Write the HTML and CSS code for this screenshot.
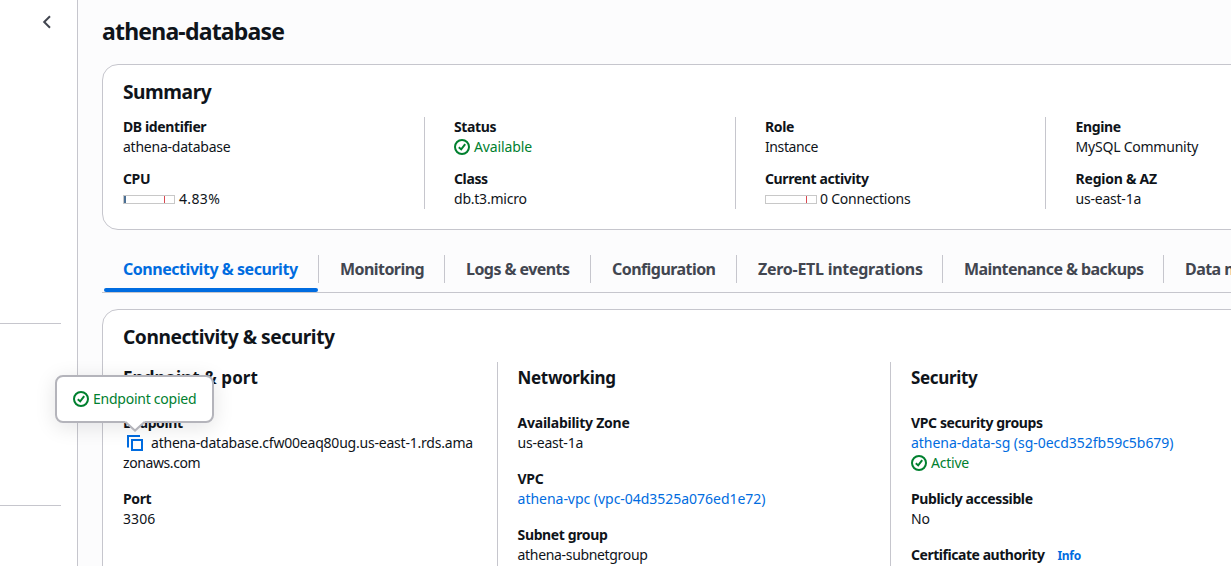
FILE: index.html
```html
<!DOCTYPE html>
<html lang="en">
<head>
<meta charset="utf-8">
<title>athena-database</title>
<link rel="stylesheet" href="styles.css">
</head>
<body>
<svg class="defs" width="0" height="0" aria-hidden="true">
  <symbol id="check" viewBox="0 0 16 16">
    <circle cx="8" cy="8" r="7" fill="none" stroke="currentColor" stroke-width="2"/>
    <path d="M4.8 8.3 7.2 10.4 11.2 5.2" fill="none" stroke="currentColor" stroke-width="2"/>
  </symbol>
</svg>
<div class="app">
  <aside class="sidebar">
    <button class="collapse" aria-label="Close navigation">
      <svg width="10" height="14" viewBox="0 0 10 14"><path d="M8 1.2 2.2 7 8 12.8" fill="none" stroke="currentColor" stroke-width="2"/></svg>
    </button>
    <hr class="rule rule-first">
    <hr class="rule">
  </aside>
  <main class="main">
    <h1 class="title">athena-database</h1>

    <section class="card summary">
      <h2 class="heading">Summary</h2>
      <div class="summary-grid">
        <div class="col">
          <div><div class="label">DB identifier</div><div class="value">athena-database</div></div>
          <div><div class="label">CPU</div><div class="value row"><span class="meter"><span class="meter-fill"></span><span class="meter-mark"></span></span><span class="percent">4.83%</span></div></div>
        </div>
        <div class="col">
          <div><div class="label">Status</div><div class="value row ok"><svg class="icon"><use href="#check"/></svg><span class="state">Available</span></div></div>
          <div><div class="label">Class</div><div class="value">db.t3.micro</div></div>
        </div>
        <div class="col">
          <div><div class="label">Role</div><div class="value tight">Instance</div></div>
          <div><div class="label">Current activity</div><div class="value row activity"><span class="meter"><span class="meter-mark"></span></span><span>0 Connections</span></div></div>
        </div>
        <div class="col">
          <div><div class="label">Engine</div><div class="value">MySQL Community</div></div>
          <div><div class="label loose">Region &amp; AZ</div><div class="value">us-east-1a</div></div>
        </div>
      </div>
    </section>

    <nav class="tabs">
      <a class="tab active"><span class="tab-text">Connectivity &amp; security</span></a>
      <a class="tab"><span class="tab-text">Monitoring</span></a>
      <a class="tab"><span class="tab-text">Logs &amp; events</span></a>
      <a class="tab"><span class="tab-text">Configuration</span></a>
      <a class="tab wide"><span class="tab-text">Zero-ETL integrations</span></a>
      <a class="tab"><span class="tab-text">Maintenance &amp; backups</span></a>
      <a class="tab"><span class="tab-text">Data migrations</span></a>
    </nav>

    <section class="card details">
      <h2 class="heading">Connectivity &amp; security</h2>
      <div class="details-grid">
        <div class="pane">
          <h3 class="subheading loose-heading">Endpoint &amp; port</h3>
          <div class="field">
            <div class="label">Endpoint</div>
            <div class="value endpoint">
              <span class="copy">
                <svg class="copy-icon" viewBox="0 0 16 16"><path d="M1 12.5V1h12M5 5h10v10H5z" fill="none" stroke="currentColor" stroke-width="2"/></svg>
                <span class="popover"><svg class="icon"><use href="#check"/></svg><span>Endpoint copied</span><svg class="arrow" width="20" height="11" viewBox="0 0 20 11"><path d="M0 0H20L10 10Z" fill="#fff"/><path d="M.5 1 10 9.6 19.5 1" fill="none" stroke="#b4b4bb" stroke-width="2"/></svg></span>
              </span>athena-database.cfw00eaq80ug.us-east-1.rds.ama<br><span class="tight">zonaws.com</span>
            </div>
          </div>
          <div class="field"><div class="label">Port</div><div class="value number">3306</div></div>
        </div>
        <div class="pane">
          <h3 class="subheading">Networking</h3>
          <div class="field"><div class="label loose">Availability Zone</div><div class="value">us-east-1a</div></div>
          <div class="field"><div class="label">VPC</div><a class="value link">athena-vpc (vpc-04d3525a076ed1e72)</a></div>
          <div class="field"><div class="label">Subnet group</div><div class="value tight-group">athena-subnetgroup</div></div>
        </div>
        <div class="pane">
          <h3 class="subheading">Security</h3>
          <div class="field"><div class="label">VPC security groups</div><a class="value link">athena-data-sg (sg-0ecd352fb59c5b679)</a><div class="value row ok"><svg class="icon"><use href="#check"/></svg><span>Active</span></div></div>
          <div class="field"><div class="label">Publicly accessible</div><div class="value">No</div></div>
          <div class="field"><div class="label authority">Certificate authority<a class="info">Info</a></div></div>
        </div>
      </div>
    </section>
  </main>
</div>
</body>
</html>
```
FILE: styles.css
```css
* { box-sizing: border-box; }
body {
  margin: 0;
  overflow: hidden;
  background: #fcfcfd;
  color: #0f141a;
  font: 14px/20px "Noto Sans", "Open Sans", sans-serif;
}
h1, h2, h3 { margin: 0; font-weight: 700; }
.defs { display: none; }
.app { display: flex; height: 566px; overflow: hidden; }

.sidebar {
  flex: 0 0 78px;
  display: flex;
  flex-direction: column;
  background: #fff;
  border-right: 1px solid #c6c6cd;
}
.collapse {
  display: block;
  width: 10px;
  height: 14px;
  margin: 15px 0 0 42px;
  padding: 0;
  border: 0;
  background: none;
  color: #424650;
}
.collapse svg { display: block; }
.rule {
  width: 61px;
  height: 1px;
  margin: 181px 0 0;
  border: 0;
  background: #c6c6cd;
}
.rule-first { margin-top: 294px; }

.main { flex: 0 0 1240px; padding: 16px 0 0 24px; }
.title { font-size: 23px; line-height: 30px; letter-spacing: -0.8px; }
.card {
  border: 1px solid #c6c6cd;
  border-radius: 16px;
  background: #fff;
  padding: 15px 20px 0;
}
.heading { font-size: 19.2px; line-height: 24px; letter-spacing: -0.46px; }
.label { font-weight: 700; letter-spacing: -0.38px; }
.loose { letter-spacing: -0.25px; }
.authority { letter-spacing: -0.46px; }
.value { letter-spacing: -0.23px; }
.tight { letter-spacing: -0.4px; }
.tight-group { letter-spacing: -0.33px; }
.number { letter-spacing: 0.1px; }
.percent { letter-spacing: 0.35px; }
.state { letter-spacing: -0.12px; }
.link { display: block; color: #006ce0; letter-spacing: -0.03px; }
.row { display: flex; align-items: center; gap: 4px; }
.activity { gap: 3px; }
.ok { color: #00802f; }
.icon { flex: none; width: 16px; height: 16px; }

.summary { height: 166px; margin-top: 18px; }
.summary-grid {
  display: grid;
  grid-template-columns: 301px 311px 310px 300px;
  margin-top: 13px;
}
.col { display: grid; gap: 12px; }
.col + .col { padding-left: 29px; border-left: 1px solid #c6c6cd; }
.col:last-child { padding-left: 29.6px; }
.meter {
  display: flex;
  width: 52px;
  height: 9px;
  border: 1px solid #c8c8c8;
}
.meter-fill { width: 2px; margin-right: -2px; background: #4a6f94; }
.meter-mark { width: 1px; margin-left: 40px; background: #d9474f; }

.tabs {
  display: grid;
  grid-template-columns: 217px 126px 146px 146px 206px 221px 178px;
  height: 44px;
  margin-top: 19px;
  border-bottom: 1px solid #c6c6cd;
  color: #424650;
  font-size: 16px;
  font-weight: 700;
  letter-spacing: -0.56px;
}
.tab { padding-top: 6px; white-space: nowrap; }
.tab-text { display: block; height: 28px; padding-left: 21px; line-height: 28px; border-right: 1px solid #c6c6cd; }
.wide { letter-spacing: -0.27px; }
.active { color: #006ce0; letter-spacing: -0.46px; }
.active::after {
  content: "";
  display: block;
  width: 214px;
  height: 4px;
  margin: 5px 0 0 2px;
  border-radius: 2px;
  background: #006ce0;
}

.details { height: 400px; margin-top: 16px; }
.details-grid {
  display: grid;
  grid-template-columns: 374px 393px 400px;
  margin-top: 13px;
  height: 340px;
}
.pane { padding-top: 5px; }
.pane + .pane { padding-left: 19.6px; border-left: 1px solid #c6c6cd; }
.pane:last-child { padding-left: 20px; }
.subheading { font-size: 17px; line-height: 22px; letter-spacing: -0.35px; margin-bottom: 24px; }
.loose-heading { letter-spacing: 0.05px; }
.field { margin-bottom: 16px; }
.endpoint { white-space: nowrap; letter-spacing: -0.21px; }
.copy {
  position: relative;
  display: inline-block;
  width: 16px;
  height: 16px;
  margin: 0 8px 0 4px;
  vertical-align: -3px;
  color: #006ce0;
}
.copy-icon { display: block; width: 16px; height: 16px; }
.popover {
  position: absolute;
  left: -72px;
  bottom: 28px;
  display: flex;
  align-items: center;
  gap: 4px;
  width: 159px;
  height: 48px;
  padding-left: 16px;
  border: 2px solid #b4b4bb;
  border-radius: 8px;
  background: #fff;
  box-shadow: 0 4px 20px 1px rgba(0, 7, 22, 0.1);
  color: #00802f;
  letter-spacing: -0.25px;
}
.arrow { position: absolute; left: 68px; top: 44px; }
.info { margin-left: 13px; color: #006ce0; font-size: 12px; letter-spacing: -0.3px; }
```
